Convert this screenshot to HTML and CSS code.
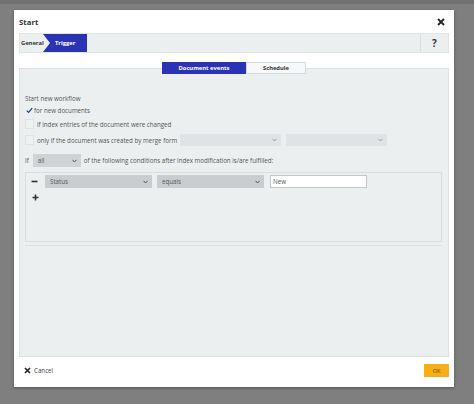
FILE: index.html
```html
<!DOCTYPE html>
<html>
<head>
<meta charset="utf-8">
<link rel="stylesheet" href="styles.css">
</head>
<body>
<div class="topstrip"></div>
<div class="dialog">
  <div class="header">
    <span class="title">Start</span>
    <svg class="close" width="8" height="8" viewBox="0 0 8 8"><path d="M1 1L7 7M7 1L1 7" stroke="#222" stroke-width="1.8"/></svg>
  </div>
  <div class="crumbs">
    <div class="crumb general">General</div>
    <div class="crumb trigger">Trigger</div>
    <div class="crumb-fill"></div>
    <div class="help">?</div>
  </div>
  <div class="tabs">
    <div class="tab active">Document events</div>
    <div class="tab">Schedule</div>
  </div>
  <div class="panel">
    <div class="line label">Start new workflow</div>
    <div class="line check-row first">
      <svg class="tick" width="7" height="7" viewBox="0 0 7 7"><path d="M0.8 3.6L2.6 5.4L6.2 1.2" stroke="#2b35b0" stroke-width="1.3" fill="none"/></svg>
      <span>for new documents</span>
    </div>
    <div class="line check-row">
      <span class="box"></span>
      <span>if index entries of the document were changed</span>
    </div>
    <div class="line check-row merge">
      <span class="box"></span>
      <span class="merge-text">only if the document was created by merge form</span>
      <div class="select disabled s1"><span></span><svg width="5" height="4" viewBox="0 0 5 4"><path d="M0.5 0.8L2.5 3L4.5 0.8" stroke="#999" stroke-width="0.9" fill="none"/></svg></div>
      <div class="select disabled s2"><span></span><svg width="5" height="4" viewBox="0 0 5 4"><path d="M0.5 0.8L2.5 3L4.5 0.8" stroke="#999" stroke-width="0.9" fill="none"/></svg></div>
    </div>
    <div class="line if-row">
      <span>If</span>
      <div class="select all"><span>all</span><svg width="5" height="4" viewBox="0 0 5 4"><path d="M0.5 0.8L2.5 3L4.5 0.8" stroke="#555" stroke-width="1" fill="none"/></svg></div>
      <span>of the following conditions after index modification is/are fulfilled:</span>
    </div>
    <div class="conditions">
      <div class="cond-row">
        <svg class="minus" width="7" height="7" viewBox="0 0 7 7"><path d="M0.5 3.5H6.5" stroke="#333" stroke-width="1.6"/></svg>
        <div class="select cond status"><span>Status</span><svg width="5" height="4" viewBox="0 0 5 4"><path d="M0.5 0.8L2.5 3L4.5 0.8" stroke="#555" stroke-width="1" fill="none"/></svg></div>
        <div class="select cond equals"><span>equals</span><svg width="5" height="4" viewBox="0 0 5 4"><path d="M0.5 0.8L2.5 3L4.5 0.8" stroke="#555" stroke-width="1" fill="none"/></svg></div>
        <div class="input">New</div>
      </div>
      <svg class="plus" width="7" height="7" viewBox="0 0 7 7"><path d="M0.5 3.5H6.5M3.5 0.5V6.5" stroke="#333" stroke-width="1.6"/></svg>
    </div>
    <div class="divider"></div>
  </div>
  <div class="footer">
    <div class="cancel">
      <svg width="7" height="7" viewBox="0 0 7 7"><path d="M1 1L6 6M6 1L1 6" stroke="#222" stroke-width="1.6"/></svg>
      <span>Cancel</span>
    </div>
    <div class="ok">OK</div>
  </div>
</div>
</body>
</html>
```
FILE: styles.css
```css
html, body {
  margin: 0;
  padding: 0;
}
body {
  width: 474px;
  height: 404px;
  background: #7f7f7f;
  font-family: "Open Sans", "Noto Sans", sans-serif;
  font-size: 6.2px;
  color: #555;
  overflow: hidden;
}
.topstrip {
  height: 4px;
  background: #717171;
  margin-bottom: 6px;
}
.dialog {
  margin-left: 14px;
  width: 440px;
  height: 377px;
  box-sizing: border-box;
  background: #fff;
  padding: 0 5px 4px 5px;
  box-shadow: 0 1px 3px rgba(0,0,0,0.35);
  display: flex;
  flex-direction: column;
}
.header {
  height: 23px;
  display: flex;
  align-items: center;
  justify-content: space-between;
  padding-top: 1px;
  box-sizing: border-box;
}
.title {
  font-weight: 700;
  font-size: 7.8px;
  color: #333;
}
.close {
  margin-right: 4px;
}
.crumbs {
  height: 20px;
  box-sizing: border-box;
  border: 1px solid #e2e5e7;
  background: #eceff0;
  display: flex;
  align-items: stretch;
}
.crumb {
  display: flex;
  align-items: center;
  font-weight: 700;
  font-size: 5.8px;
}
.general {
  color: #333;
  padding-left: 1px;
  width: 22px;
}
.trigger {
  background: #2b33b5;
  color: #fff;
  width: 44px;
  padding-left: 12px;
  box-sizing: border-box;
  clip-path: polygon(0 0, 100% 0, 100% 100%, 0 100%, 7px 50%);
}
.crumb-fill {
  flex: 1;
}
.help {
  width: 27px;
  border-left: 1px solid #dadee0;
  display: flex;
  align-items: center;
  justify-content: center;
  font-weight: 700;
  font-size: 10px;
  color: #333;
}
.tabs {
  margin-top: 9px;
  height: 12px;
  display: flex;
  justify-content: center;
  position: relative;
  z-index: 1;
}
.tab {
  display: flex;
  align-items: center;
  justify-content: center;
  font-weight: 700;
  font-size: 5.8px;
  color: #333;
  background: #f7f8f9;
  border: 1px solid #d6dadc;
  box-sizing: border-box;
  width: 60px;
}
.tab.active {
  width: 84px;
  background: #2b33b5;
  border-color: #2b33b5;
  color: #fff;
}
.panel {
  margin-top: -6px;
  height: 289px;
  box-sizing: border-box;
  background: #ebeff0;
  border: 1px solid #dde1e3;
  padding: 23px 6px 0 5px;
  display: flex;
  flex-direction: column;
}
.line {
  height: 12px;
  display: flex;
  align-items: center;
}
.check-row {
  margin-top: 2px;
}
.check-row.first {
  margin-top: 0;
}
.tick {
  margin-left: 1px;
  margin-right: 1px;
}
.box {
  width: 9px;
  height: 10px;
  box-sizing: border-box;
  background: #eef1f2;
  border: 1px solid #dfe3e5;
  margin-right: 3px;
}
.check-row.merge {
  margin-top: 4px;
}
.merge-text {
  width: 143px;
  white-space: nowrap;
}
.select {
  height: 12px;
  box-sizing: border-box;
  display: flex;
  align-items: center;
  justify-content: space-between;
  padding: 0 4px 0 5px;
}
.select.disabled {
  background: #dfe3e5;
  width: 101px;
}
.s2 {
  margin-left: 5px;
}
.if-row {
  margin-top: 8px;
  height: 13px;
}
.select.all {
  background: #cfd3d6;
  width: 48px;
  height: 13px;
  margin: 0 3px 0 4px;
  color: #555;
}
.conditions {
  margin-top: 5px;
  height: 70px;
  box-sizing: border-box;
  border: 1px solid #dadee0;
  background: #ebeff0;
  padding: 2px 0 0 5px;
  display: flex;
  flex-direction: column;
}
.cond-row {
  display: flex;
  align-items: center;
  height: 13px;
}
.minus {
  margin-right: 7px;
}
.select.cond {
  background: #c9cdd0;
  width: 107px;
  height: 13px;
  margin-right: 5px;
  color: #555;
}
.input {
  width: 97px;
  height: 13px;
  box-sizing: border-box;
  border: 1px solid #c2c6c9;
  background: #fff;
  display: flex;
  align-items: center;
  padding-left: 2px;
  margin-left: 1px;
  color: #555;
}
.plus {
  margin-top: 6px;
  margin-left: 1px;
}
.divider {
  margin-top: 3px;
  height: 1px;
  border-top: 1px solid #dde1e3;
}
.footer {
  height: 26px;
  display: flex;
  align-items: center;
  justify-content: space-between;
  padding-top: 1px;
  box-sizing: border-box;
}
.cancel {
  display: flex;
  align-items: center;
  padding-left: 5px;
  gap: 3px;
  font-size: 6.2px;
  color: #444;
}
.ok {
  width: 25px;
  height: 13px;
  background: #fbad13;
  display: flex;
  align-items: center;
  justify-content: center;
  font-size: 5.5px;
  color: #5a4a20;
}
```
